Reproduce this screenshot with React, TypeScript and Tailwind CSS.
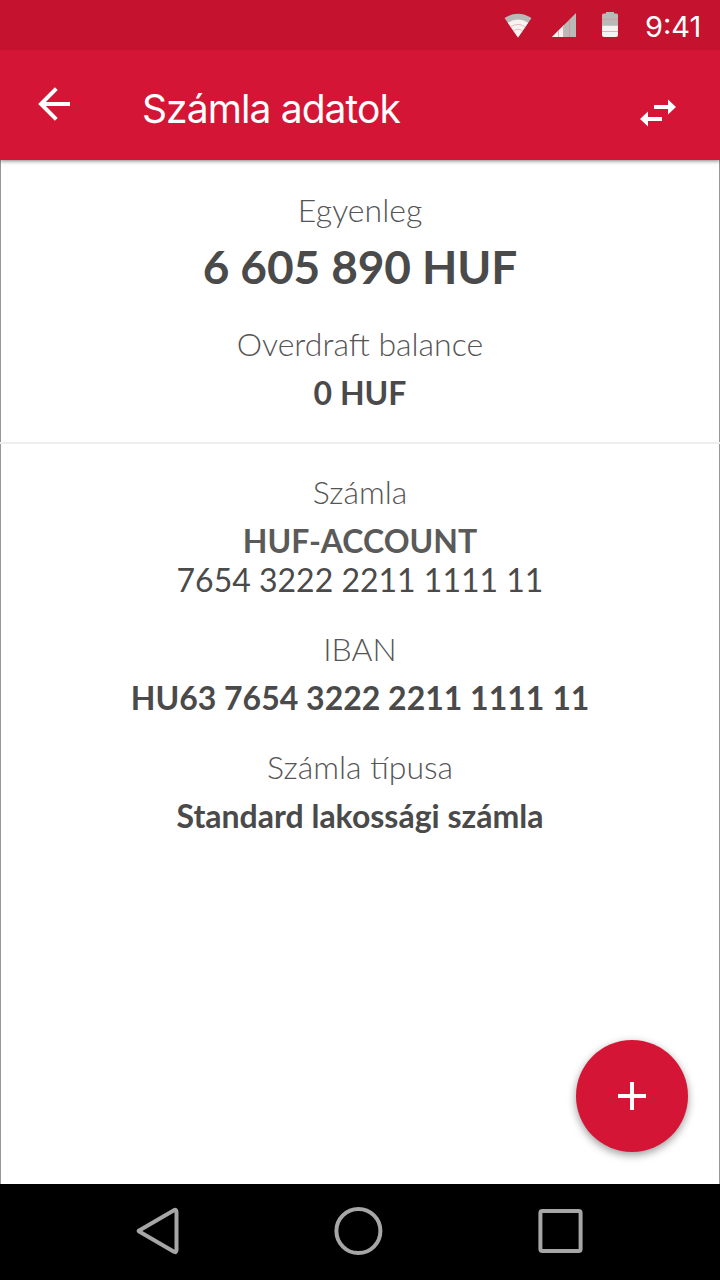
import type { ReactNode } from "react";

function Label({ children }: { children: ReactNode }) {
  return <div className="h-[40px] shrink-0 text-[32px] font-light leading-[40px] text-[#555]">{children}</div>;
}

function Value({ children }: { children: ReactNode }) {
  return <div className="h-[40px] shrink-0 text-[32px] font-bold leading-[40px]">{children}</div>;
}

function StatusBar() {
  return (
    <div className="z-20 flex h-[50px] shrink-0 items-start bg-[#c4122f] pl-[504px] text-white">
      <svg className="mt-[13px]" width="28" height="25" viewBox="0 0 28 25">
        <path d="M0.5 5Q14-3.5 27.5 5L14 24.5z" fill="#b9b9b7" />
        <path d="M3.8 9.8Q14 3.2 24.2 9.8L14 24.5z" fill="#f5f4f2" />
        <path d="M6.5 14Q14 8.8 21.5 14M9.3 18Q14 14.5 18.7 18" fill="none" stroke="#e6a9b1" strokeWidth="0.8" />
      </svg>
      <svg className="ml-[20px] mt-[13px]" width="24" height="24" viewBox="0 0 24 24">
        <path d="M0 24L24 0v24z" fill="#b9b9b7" />
        <path d="M0 24L12 12v12z" fill="#f5f4f2" />
        <path d="M6.5 18v6M11.5 13v11M17.5 7v17" stroke="#d98c98" strokeWidth="0.7" />
      </svg>
      <svg className="ml-[26px] mt-[12px]" width="16" height="25" viewBox="0 0 16 25">
        <path d="M4 0h8v1.5h2.5q1.5 0 1.5 1.5V14H0V3q0-1.5 1.5-1.5H4z" fill="#b9b9b7" />
        <path d="M0 13.7h16V23q0 2-2 2H2q-2 0-2-2z" fill="#f5f4f2" />
        <path d="M0 7.4h16M0 19.5h16" stroke="#dc919c" strokeWidth="0.7" />
      </svg>
      <span className="ml-[27px] mt-[9px] font-['Inter',sans-serif] text-[29px] leading-[36px]">9:41</span>
    </div>
  );
}

function AppBar() {
  return (
    <header className="z-10 flex h-[110px] shrink-0 items-start bg-[#d51535] text-white shadow-[0_1px_4px_rgba(0,0,0,0.5)]">
      <button className="ml-[38px] mt-[37px]" aria-label="Vissza">
        <svg className="block" width="33" height="34" viewBox="0 0 33 34">
          <path d="M18.3 1.7L3 17l15.3 15.3M3 17h29" fill="none" stroke="#fff" strokeWidth="4" />
        </svg>
      </button>
      <h1 className="ml-[71px] mt-[34px] flex-1 font-['Inter',sans-serif] text-[39px] font-normal leading-[50px] tracking-[-0.9px]">Számla adatok</h1>
      <button className="mr-[44px] mt-[49px]" aria-label="Átutalás">
        <svg className="block" width="36" height="28" viewBox="0 0 36 28">
          <path d="M14 6h14V0.5L36 8l-8 7.5V10H14zM22 22H8v5.5L0 20l8-7.5V18h14z" fill="#fff" />
        </svg>
      </button>
    </header>
  );
}

function NavBar() {
  return (
    <nav className="flex h-[96px] shrink-0 items-center bg-black pl-[136px]">
      <svg width="44" height="50" viewBox="0 0 44 50" fill="none" stroke="#a6a6a6" strokeWidth="4" strokeLinejoin="round">
        <path d="M3.2 23.4L37.6 3.4Q40.5 1.8 40.5 5V43Q40.5 46.2 37.6 44.6L3.2 24.6Q2 24 3.2 23.4z" />
      </svg>
      <svg className="ml-[154px]" width="50" height="50" viewBox="0 0 50 50" fill="none" stroke="#a6a6a6" strokeWidth="4">
        <circle cx="24.4" cy="24" r="22" />
      </svg>
      <svg className="ml-[154px]" width="46" height="50" viewBox="0 0 46 50" fill="none" stroke="#a6a6a6" strokeWidth="4">
        <rect x="2.4" y="4" width="40.2" height="40" rx="2" />
      </svg>
    </nav>
  );
}

export default function App() {
  return (
    <div className="relative flex h-[1280px] w-[720px] flex-col overflow-hidden bg-white font-['Lato',sans-serif] text-[#4a4a4a]">
      <StatusBar />
      <AppBar />
      <main className="flex h-[1024px] flex-col border-x border-[#979797] text-center">
        <section className="flex flex-col pb-[29px] pt-[30px]">
          <Label>Egyenleg</Label>
          <div className="h-[76px] shrink-0 text-[46px] font-bold leading-[73px] tracking-[-0.1px]">6 605 890 HUF</div>
          <div className="mt-[18px] flex flex-col gap-[9px]">
            <Label>Overdraft balance</Label>
            <Value>0 HUF</Value>
          </div>
        </section>
        <div className="-mx-px h-[2px] shrink-0 bg-[#eee]" />
        <section className="flex flex-col gap-[29px] pt-[28px]">
          <div>
            <Label>Számla</Label>
            <div className="mt-[9px] h-[39px] text-[32px] font-bold leading-[40px] text-[#5a5a59]">HUF-ACCOUNT</div>
            <div className="h-[40px] text-[32px] leading-[40px]">7654 3222 2211 1111 11</div>
          </div>
          <div className="flex flex-col gap-[9px]">
            <Label>IBAN</Label>
            <Value>HU63 7654 3222 2211 1111 11</Value>
          </div>
          <div className="flex flex-col gap-[9px]">
            <Label>Számla típusa</Label>
            <Value>Standard lakossági számla</Value>
          </div>
        </section>
      </main>
      <button
        className="absolute bottom-[128px] right-[32px] flex size-[112px] items-center justify-center rounded-full bg-[#d51535] shadow-[0_3px_9px_rgba(0,0,0,0.4)]"
        aria-label="Új művelet"
      >
        <svg width="28" height="28" viewBox="0 0 28 28">
          <path d="M12 0h4v12h12v4H16v12h-4V16H0v-4h12z" fill="#fff" />
        </svg>
      </button>
      <NavBar />
    </div>
  );
}
